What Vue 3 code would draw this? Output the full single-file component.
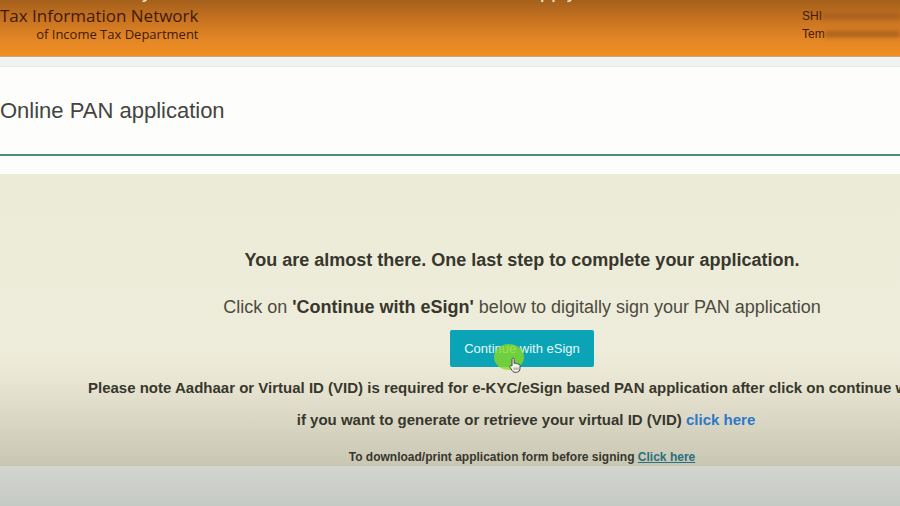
<script setup>
</script>

<template>
  <div class="page">
    <header class="banner">
      <div class="brand">
        <p class="brand-name">Tax Information Network</p>
        <p class="brand-sub">of Income Tax Department</p>
      </div>
      <div class="caption"><span>y</span><span>apply</span></div>
      <div class="account">
        <p class="account-row">SHI<span class="redacted"></span></p>
        <p class="account-row">Tem<span class="redacted"></span></p>
      </div>
    </header>
    <div class="strip"></div>
    <section class="heading">
      <h1>Online PAN application</h1>
    </section>
    <main class="panel">
      <div class="content">
        <h2>You are almost there. One last step to complete your application.</h2>
        <p class="instruction">Click on <b>'Continue with eSign'</b> below to digitally sign your PAN application</p>
        <button class="esign" type="button">
          Continue with eSign
          <span class="halo"></span>
          <svg class="pointer" viewBox="0 0 12 16" aria-hidden="true">
            <path d="M3 9V2.2C3 .6 5.2.6 5.2 2.2V6.5C5.5 5.7 7 5.8 7.2 6.9C7.8 6.1 9 6.4 9.1 7.4C9.8 6.9 11 7.3 11 8.4V11.2C11 13.7 9.7 15.3 7.4 15.3H6C4.4 15.3 3.6 14.4 2.8 13L.9 10.1C.2 8.9 1.4 8 2.3 8.8Z" />
            <path class="knuckles" d="M5.2 10.5V13M7.1 10.5V13M9 10.5V13" />
          </svg>
        </button>
      </div>
      <p class="note">Please note Aadhaar or Virtual ID (VID) is required for e-KYC/eSign based PAN application after click on continue w</p>
      <div class="content">
        <p class="retrieve">if you want to generate or retrieve your virtual ID (VID) <a class="vid-link" href="#">click here</a></p>
        <p class="download">To download/print application form before signing <a class="print-link" href="#">Click here</a></p>
      </div>
    </main>
    <footer class="footer"></footer>
  </div>
</template>

<style>
body {
  margin: 0;
}
</style>

<style scoped>
.page {
  display: flex;
  flex-direction: column;
  min-height: 100vh;
  overflow: hidden;
  background: #fdfefb;
  color: #37372d;
  font-family: "Liberation Sans", Arial, sans-serif;
}
p, h1, h2 {
  margin: 0;
}
.banner {
  position: relative;
  display: flex;
  justify-content: space-between;
  padding: 7px 0 13px;
  overflow: hidden;
  background: linear-gradient(#a4601b, #c77320 35%, #e18525 68%, #f18e22);
  border-bottom: 1px solid #cda775;
  color: #42190e;
}
.brand {
  font-family: "Open Sans", "Noto Sans", sans-serif;
  font-weight: 500;
  text-align: right;
}
.brand-name {
  font-size: 17px;
  line-height: 18px;
}
.brand-sub {
  font-size: 13px;
  line-height: 18px;
}
.caption {
  position: absolute;
  top: -19px;
  left: 142px;
  display: flex;
  gap: 377px;
  font-size: 20px;
  line-height: 20px;
  color: #f3ead8;
}
.account {
  width: 98px;
  font-size: 12px;
  line-height: 18px;
}
.account-row {
  display: flex;
  align-items: center;
}
.redacted {
  flex: 1;
  height: 6px;
  background: #a8601f;
  filter: blur(2px);
}
.strip {
  height: 9px;
  background: #eff3f1;
  border-bottom: 1px solid #e6eae7;
}
.heading {
  padding: 30px 0;
  border-bottom: 2px solid #4b8c7b;
}
h1 {
  font-size: 22px;
  line-height: 27px;
  font-weight: 400;
  color: #444442;
}
.panel {
  margin-top: 18px;
  padding-top: 72px;
  background: linear-gradient(#ecebd8, #eeecda 60%, #e9e7d4 70%, #c9c7b4);
}
.content {
  display: flex;
  flex-direction: column;
  align-items: center;
  padding-left: 144px;
  white-space: nowrap;
}
h2 {
  font-size: 18px;
  line-height: 28px;
}
.instruction {
  margin: 19px 0 9px;
  font-size: 18px;
  line-height: 28px;
  color: #4c4b40;
}
.instruction b {
  color: #37372d;
}
.esign {
  position: relative;
  padding: 0 14px;
  border: 0;
  border-radius: 2px;
  background: #0ba4b6;
  color: #e4f9f8;
  font-family: inherit;
  font-size: 13px;
  line-height: 37px;
}
.halo {
  position: absolute;
  top: 14px;
  left: 44px;
  width: 30px;
  height: 26px;
  border-radius: 50%;
  background: rgb(137 218 36 / 80%);
}
.pointer {
  position: absolute;
  top: 27px;
  left: 59px;
  width: 12px;
  height: 16px;
  fill: #f4f5ed;
  stroke: #494b40;
  stroke-width: 1;
}
.knuckles {
  stroke: #8b8e80;
}
.note {
  padding: 10px 0 0 88px;
  font-size: 15px;
  font-weight: 700;
  line-height: 22px;
  white-space: nowrap;
}
.retrieve {
  padding: 10px 0 17px 8px;
  font-size: 15px;
  font-weight: 700;
  line-height: 22px;
}
.vid-link {
  color: #2d78ca;
  text-decoration: none;
}
.download {
  font-size: 12px;
  font-weight: 700;
  line-height: 18px;
}
.print-link {
  color: #286f80;
}
.footer {
  flex: 1;
  background: linear-gradient(#d3d5cf, #c6cac4);
}
</style>
